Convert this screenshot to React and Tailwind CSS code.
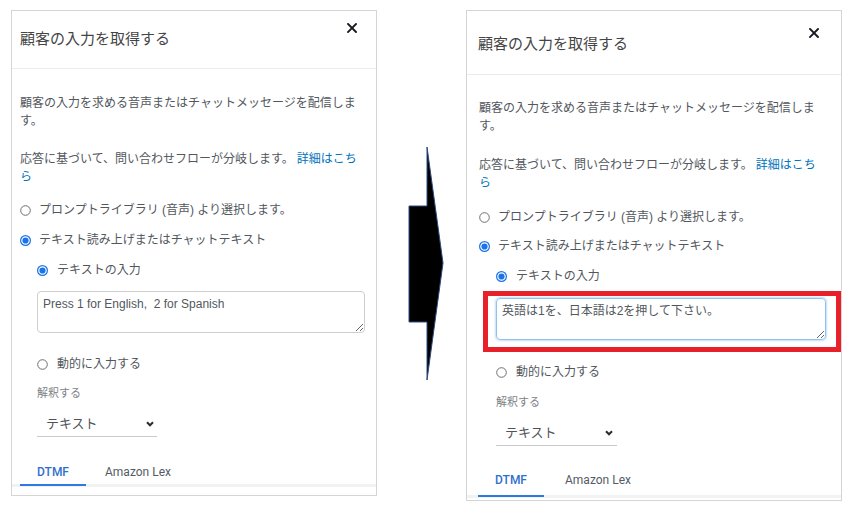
import React from "react";

const FONT = "font-['Liberation_Sans','Noto_Sans_CJK_JP',sans-serif]";

function Radio({ checked }) {
  return checked ? (
    <svg width="11" height="11" viewBox="0 0 11 11" className="shrink-0">
      <circle cx="5.5" cy="5.5" r="4.9" fill="#fff" stroke="#1a73e8" strokeWidth="1.2" />
      <circle cx="5.5" cy="5.5" r="3.1" fill="#1a73e8" />
    </svg>
  ) : (
    <svg width="11" height="11" viewBox="0 0 11 11" className="shrink-0">
      <circle cx="5.5" cy="5.5" r="4.8" fill="#fff" stroke="#6e6e6e" strokeWidth="1" />
    </svg>
  );
}

function CloseX() {
  return (
    <svg width="10" height="10" viewBox="0 0 10 10">
      <path d="M1 1 L9 9 M9 1 L1 9" stroke="#16191f" strokeWidth="1.9" strokeLinecap="square" />
    </svg>
  );
}

function Chevron() {
  return (
    <svg width="8" height="6" viewBox="0 0 8 6">
      <path d="M1 1.2 L4 4.3 L7 1.2" fill="none" stroke="#2b2b2b" strokeWidth="2" />
    </svg>
  );
}

const LEFT = {
  outer: "w-[366px]",
  header: "h-[58px]",
  title: "ml-[8px] mt-[18px]",
  close: "mr-[19px] mt-[12px]",
  body: "pl-[8px] pr-[11px] pt-[25px] pb-[8px]",
  p2: "mt-[20px]",
  r1: "mt-[15px]",
  r2: "mt-[12px]",
  sub: "mt-[12px]",
  ta: "mt-[12px]",
  dyn: "mt-[22px]",
  label: "mt-[12px]",
  select: "mt-[10px] w-[120px] pr-[3px]",
  tabs: "mt-[23px] -ml-[8px] -mr-[11px] pl-[8px]",
  tab1: "pt-0 pb-0",
  tab2: "pl-[19px] pt-0 pb-0",
};

const RIGHT = {
  outer: "w-[376px]",
  header: "h-[64px]",
  title: "ml-[11px] mt-[23px]",
  close: "mr-[22px] mt-[17px]",
  body: "pl-[12px] pr-[15px] pt-[24px] pb-[2px]",
  p2: "mt-[21px]",
  r1: "mt-[16px]",
  r2: "mt-[11px]",
  sub: "mt-[12px]",
  ta: "mt-[13px]",
  dyn: "mt-[23px]",
  label: "mt-[13px]",
  select: "mt-[10px] w-[121px] pr-[4px]",
  tabs: "mt-[21px] -ml-[12px] -mr-[15px] pl-[11px]",
  tab1: "pt-[1px] pb-[3px]",
  tab2: "pl-[21px] pt-[1px] pb-[3px]",
};

function Panel({ v, text, focused }) {
  return (
    <div className={`${v.outer} shrink-0 border border-[#d5d5d5] bg-white ${FONT}`}>
      <div className={`${v.header} flex items-start justify-between border-b border-[#eaeded]`}>
        <div className={`${v.title} text-[15px] leading-[20px] text-[#454545]`}>顧客の入力を取得する</div>
        <div className={v.close}>
          <CloseX />
        </div>
      </div>
      <div className={`${v.body} text-[12px] text-[#52575d]`}>
        <p className="leading-[18px]">顧客の入力を求める音声またはチャットメッセージを配信します。</p>
        <p className={`${v.p2} leading-[18px]`}>
          応答に基づいて、問い合わせフローが分岐します。<span className="ml-[3px] text-[#0073bb]">詳細はこちら</span>
        </p>
        <div className={`${v.r1} flex items-center gap-[8px] leading-[18px]`}>
          <Radio />
          <span>プロンプトライブラリ (音声) より選択します。</span>
        </div>
        <div className={`${v.r2} flex items-center gap-[8px] leading-[18px]`}>
          <Radio checked />
          <span>テキスト読み上げまたはチャットテキスト</span>
        </div>
        <div className={`${v.sub} ml-[17px] flex items-center gap-[9px] leading-[18px]`}>
          <Radio checked />
          <span>テキストの入力</span>
        </div>
        <div className={`${v.ta} ml-[17px] relative`}>
          <textarea
            readOnly
            value={text}
            className={`block w-full h-[42px] rounded-[4px] border pl-[5px] pt-[5px] text-[12px] leading-[14px] text-[#52575d] outline-none ${FONT} ${
              focused
                ? "border-[#8fc2f2] shadow-[0_0_2px_1px_rgba(90,160,230,0.35)]"
                : "border-[#cfcfcf]"
            }`}
          />
          {focused && (
            <div className="absolute -left-[13px] -top-[7px] -right-[15px] -bottom-[12px] border-[5px] border-[#e8202a] pointer-events-none" />
          )}
        </div>
        <div className={`${v.dyn} ml-[17px] flex items-center gap-[9px] leading-[18px]`}>
          <Radio />
          <span>動的に入力する</span>
        </div>
        <div className={`${v.label} ml-[17px] text-[11px] leading-[16px] text-[#7d8287]`}>解釈する</div>
        <div
          className={`${v.select} ml-[17px] h-[26px] border-b border-[#cacaca] flex items-center justify-between pl-[9px]`}
        >
          <span className="text-[13px] leading-[18px] text-[#4f5358]">テキスト</span>
          <Chevron />
        </div>
        <div className={`${v.tabs} flex border-b-[3px] border-[#f1f2f2]`}>
          <div
            className={`${v.tab1} w-[66px] -mb-[2px] border-b-2 border-[#2f7ae0] text-center font-['Roboto',sans-serif] text-[12px] leading-[24px] font-medium text-[#2f6fcc]`}
          >
            DTMF
          </div>
          <div
            className={`${v.tab2} -mb-[2px] font-['Roboto',sans-serif] text-[12px] leading-[24px] text-[#545b64]`}
          >
            Amazon Lex
          </div>
        </div>
      </div>
    </div>
  );
}

export default function App() {
  return (
    <div className="w-[852px] h-[517px] bg-white flex items-start pl-[11px] pt-[10px] overflow-hidden">
      <Panel v={LEFT} text="Press 1 for English,  2 for Spanish" />
      <svg width="36" height="236" viewBox="0 0 36 236" className="ml-[31px] mt-[136px] shrink-0">
        <polygon
          points="1,60 19,60 19,1 35,117 19,234 19,176 1,176"
          fill="#000"
          stroke="#2c4a80"
          strokeWidth="1"
        />
      </svg>
      <div className="ml-[22px]">
        <Panel v={RIGHT} text="英語は1を、日本語は2を押して下さい。" focused />
      </div>
    </div>
  );
}
